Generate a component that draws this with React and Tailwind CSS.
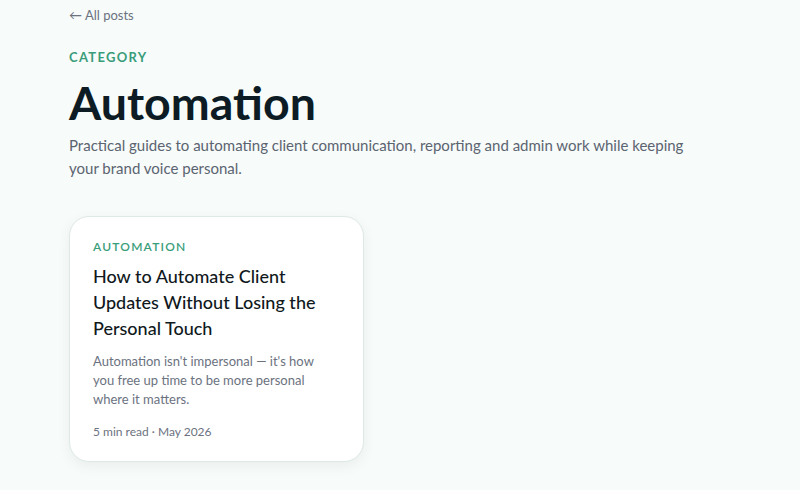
import React from 'react'

const posts = [
  {
    tag: "Automation",
    title: "How to Automate Client Updates Without Losing the Personal Touch",
    excerpt: "Automation isn't impersonal — it's how you free up time to be more personal where it matters.",
    meta: "5 min read · May 2026",
  },
]

function PostCard({ post }) {
  return (
    <a className="block w-[295px] rounded-[20px] border border-[#dde9e5] bg-white px-[23px] pt-[22px] pb-[21px] shadow-[0_4px_14px_rgba(15,40,35,0.06)]">
      <div className="text-[12px] font-semibold uppercase tracking-[0.1em] text-[#3a9d7a] leading-[16px]">
        {post.tag}
      </div>
      <h2 className="mt-[8px] text-[18px] leading-[26px] font-medium text-[#101820]">
        {post.title}
      </h2>
      <p className="mt-[11px] max-w-[236px] text-[13px] leading-[19px] text-[#6b7280]">
        {post.excerpt}
      </p>
      <div className="mt-[15px] text-[12px] leading-[16px] text-[#6b7280]">{post.meta}</div>
    </a>
  )
}

export default function App() {
  return (
    <div className="min-h-screen bg-[#f7fbfa] font-['Lato',sans-serif]">
      <div className="px-[69px] pt-[2px]">
        <a className="text-[13px] leading-[18px] text-[#6b7280]">← All posts</a>
        <div className="mt-[22px] text-[13px] font-bold uppercase tracking-[0.1em] text-[#3a9d7a] leading-[18px]">
          Category
        </div>
        <h1 className="mt-[8px] text-[46.5px] leading-[56px] font-bold text-[#0d1b24]">
          Automation
        </h1>
        <p className="mt-[4px] max-w-[640px] text-[15px] leading-[23px] text-[#5b6470]">
          Practical guides to automating client communication, reporting and admin work while keeping your brand voice personal.
        </p>
        <div className="mt-[36px] grid grid-cols-[295px] gap-6">
          {posts.map((p) => (
            <PostCard key={p.title} post={p} />
          ))}
        </div>
      </div>
    </div>
  )
}
